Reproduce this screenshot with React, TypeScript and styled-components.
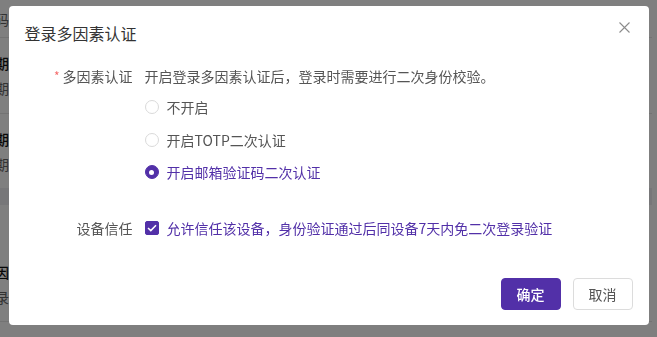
import React, { useState } from "react";
import styled, { createGlobalStyle } from "styled-components";

const PURPLE = "#5230a8";

const GlobalStyle = createGlobalStyle`
  html, body {
    margin: 0;
    padding: 0;
    background: #ffffff;
    font-family: "Noto Sans CJK SC", "Noto Sans", sans-serif;
    overflow: hidden;
  }
  * {
    box-sizing: border-box;
  }
`;

// background page (behind the mask)
const Page = styled.div`
  width: 657px;
  height: 337px;
  background: #ffffff;
  margin-left: -5px;
`;

const PageRow = styled.div<{ $height: number; $tint?: boolean; $line?: boolean }>`
  height: ${(p) => p.$height}px;
  background: ${(p) => (p.$tint ? "#eeeef3" : "#ffffff")};
  border-bottom: ${(p) => (p.$line ? "1px solid #e6e6e6" : "none")};
  display: flex;
  flex-direction: column;
  justify-content: center;
  gap: 7px;
  padding-left: 0;
`;

const PageText = styled.div<{ $strong?: boolean }>`
  font-size: 14px;
  line-height: 18px;
  color: ${(p) => (p.$strong ? "#111111" : "#666666")};
  font-weight: ${(p) => (p.$strong ? 500 : 400)};
`;

const Mask = styled.div`
  position: fixed;
  inset: 0;
  background: rgba(0, 0, 0, 0.5);
  display: flex;
  justify-content: center;
  align-items: flex-start;
  padding-top: 6px;
`;

const Modal = styled.div`
  width: 640px;
  height: 319px;
  background: #ffffff;
  border-radius: 4px;
  display: flex;
  flex-direction: column;
  position: relative;
`;

const Header = styled.div`
  padding: 15px 16px 0 16px;
  display: flex;
  align-items: center;
  justify-content: space-between;
`;

const Title = styled.div`
  font-size: 16px;
  line-height: 24px;
  color: #333333;
`;

const CloseButton = styled.button`
  border: none;
  background: transparent;
  padding: 0;
  width: 16px;
  height: 16px;
  display: flex;
  align-items: center;
  justify-content: center;
  margin-right: 0px;
  margin-top: -12px;
  cursor: pointer;
`;

const Form = styled.div`
  margin-top: 20px;
  display: flex;
  flex-direction: column;
`;

const FormItem = styled.div<{ $gapTop?: number }>`
  display: flex;
  align-items: flex-start;
  margin-top: ${(p) => p.$gapTop ?? 0}px;
`;

const Label = styled.div`
  width: 124px;
  text-align: right;
  font-size: 14px;
  line-height: 22px;
  color: #555555;
  margin-right: 12px;
  flex-shrink: 0;
`;

const Required = styled.span`
  color: #f56c6c;
  font-size: 12px;
  margin-right: 3px;
  vertical-align: top;
`;

const Content = styled.div`
  display: flex;
  flex-direction: column;
`;

const Hint = styled.div`
  font-size: 14px;
  line-height: 22px;
  color: #555555;
`;

const RadioGroup = styled.div`
  display: flex;
  flex-direction: column;
  gap: 10.5px;
  margin-top: 9px;
`;

const RadioRow = styled.label`
  display: flex;
  align-items: center;
  height: 22px;
  cursor: pointer;
`;

const RadioCircle = styled.span<{ $checked: boolean }>`
  width: 14px;
  height: 14px;
  border-radius: 50%;
  border: 1px solid ${(p) => (p.$checked ? PURPLE : "#d9d9d9")};
  background: ${(p) => (p.$checked ? PURPLE : "#ffffff")};
  display: flex;
  align-items: center;
  justify-content: center;
  margin-right: 8px;
  flex-shrink: 0;

  &::after {
    content: "";
    width: 5px;
    height: 5px;
    border-radius: 50%;
    background: #ffffff;
    display: ${(p) => (p.$checked ? "block" : "none")};
  }
`;

const OptionText = styled.span<{ $active?: boolean }>`
  font-size: 14px;
  line-height: 22px;
  color: ${(p) => (p.$active ? PURPLE : "#555555")};
`;

const CheckRow = styled.label`
  display: flex;
  align-items: center;
  height: 22px;
  cursor: pointer;
`;

const CheckBox = styled.span<{ $checked: boolean }>`
  width: 14px;
  height: 14px;
  border-radius: 2px;
  background: ${(p) => (p.$checked ? PURPLE : "#ffffff")};
  border: 1px solid ${(p) => (p.$checked ? PURPLE : "#d9d9d9")};
  display: flex;
  align-items: center;
  justify-content: center;
  margin-right: 8px;
  flex-shrink: 0;
`;

const Footer = styled.div`
  margin-top: auto;
  padding: 0 16px 15px 0;
  display: flex;
  justify-content: flex-end;
  gap: 12px;
`;

const Button = styled.button<{ $primary?: boolean }>`
  width: 60px;
  height: 32px;
  border-radius: 4px;
  font-family: inherit;
  font-size: 14px;
  cursor: pointer;
  border: 1px solid ${(p) => (p.$primary ? PURPLE : "#dcdcdc")};
  background: ${(p) => (p.$primary ? PURPLE : "#ffffff")};
  color: ${(p) => (p.$primary ? "#ffffff" : "#555555")};
  font-weight: ${(p) => (p.$primary ? 500 : 400)};
`;

const options = ["不开启", "开启TOTP二次认证", "开启邮箱验证码二次认证"];

const App: React.FC = () => {
  const [mode, setMode] = useState<number>(2);
  const [trust, setTrust] = useState<boolean>(true);

  return (
    <>
      <GlobalStyle />
      <Page>
        <PageRow $height={38} $line>
          <PageText>码</PageText>
        </PageRow>
        <PageRow $height={76} $line>
          <PageText $strong>期</PageText>
          <PageText>期</PageText>
        </PageRow>
        <PageRow $height={74}>
          <PageText $strong>期</PageText>
          <PageText>期</PageText>
        </PageRow>
        <PageRow $height={17} $tint />
        <PageRow $height={117} $line>
          <div style={{ height: 36 }} />
          <PageText $strong>因</PageText>
          <PageText>录</PageText>
        </PageRow>
      </Page>

      <Mask>
        <Modal>
          <Header>
            <Title>登录多因素认证</Title>
            <CloseButton aria-label="close">
              <svg width="11" height="11" viewBox="0 0 11 11">
                <path
                  d="M0.5 0.5L10.5 10.5M10.5 0.5L0.5 10.5"
                  stroke="#8c8c8c"
                  strokeWidth="1.1"
                />
              </svg>
            </CloseButton>
          </Header>

          <Form>
            <FormItem>
              <Label>
                <Required>*</Required>多因素认证
              </Label>
              <Content>
                <Hint>开启登录多因素认证后，登录时需要进行二次身份校验。</Hint>
                <RadioGroup>
                  {options.map((o, i) => (
                    <RadioRow key={o} onClick={() => setMode(i)}>
                      <RadioCircle $checked={mode === i} />
                      <OptionText $active={mode === i}>{o}</OptionText>
                    </RadioRow>
                  ))}
                </RadioGroup>
              </Content>
            </FormItem>

            <FormItem $gapTop={34}>
              <Label>设备信任</Label>
              <CheckRow onClick={() => setTrust((prev) => !prev)}>
                <CheckBox $checked={trust}>
                  {trust && (
                    <svg width="10" height="8" viewBox="0 0 10 8">
                      <path
                        d="M1 4L3.8 6.6L9 1.2"
                        stroke="#ffffff"
                        strokeWidth="1.5"
                        fill="none"
                      />
                    </svg>
                  )}
                </CheckBox>
                <OptionText $active>
                  允许信任该设备，身份验证通过后同设备7天内免二次登录验证
                </OptionText>
              </CheckRow>
            </FormItem>
          </Form>

          <Footer>
            <Button $primary>确定</Button>
            <Button>取消</Button>
          </Footer>
        </Modal>
      </Mask>
    </>
  );
};

export default App;
